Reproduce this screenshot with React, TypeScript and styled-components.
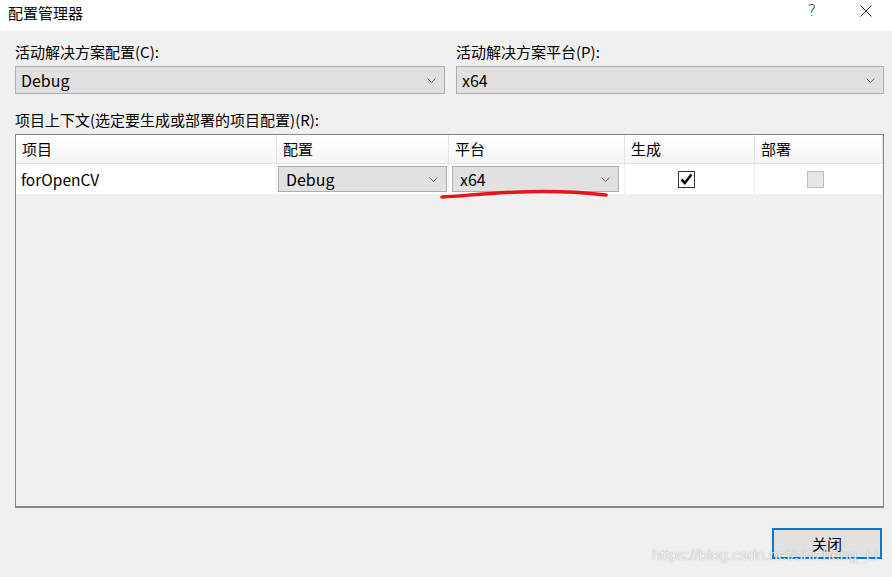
import React from 'react';
import styled, { createGlobalStyle } from 'styled-components';

const GlobalStyle = createGlobalStyle`
  html, body {
    margin: 0;
    padding: 0;
    background: #f0f0f0;
  }
  * {
    box-sizing: border-box;
  }
`;

const FONT = `"Noto Sans CJK SC", "Noto Sans", sans-serif`;

const Window = styled.div`
  position: relative;
  width: 892px;
  height: 577px;
  display: flex;
  flex-direction: column;
  background: #f0f0f0;
  font-family: ${FONT};
  font-size: 15px;
  color: #000;
  overflow: hidden;
`;

const TitleBar = styled.div`
  height: 31px;
  flex-shrink: 0;
  display: flex;
  align-items: center;
  background: #fff;
  padding-left: 8px;
`;

const Title = styled.div`
  flex-grow: 1;
  line-height: 20px;
  margin-top: -6px;
`;

const TitleButton = styled.div<{ $gap?: number }>`
  width: 46px;
  height: 31px;
  display: flex;
  align-items: center;
  justify-content: center;
  margin-top: -10px;
  margin-right: ${(p) => p.$gap ?? 0}px;
  font-size: 16px;
  font-family: "DejaVu Sans", sans-serif;
  font-weight: 300;
  color: #222;
`;

const Content = styled.div`
  flex-grow: 1;
  display: flex;
  flex-direction: column;
  padding: 11px 8px 18px 15px;
`;

const TopRow = styled.div`
  display: grid;
  grid-template-columns: 430px 1fr;
  column-gap: 11px;
`;

const Field = styled.div`
  display: flex;
  flex-direction: column;
  gap: 4px;
`;

const Label = styled.div`
  line-height: 20px;
  height: 20px;
  white-space: nowrap;
`;

const ComboBox = styled.div<{ $h?: number }>`
  height: ${(p) => p.$h ?? 28}px;
  display: flex;
  align-items: center;
  justify-content: space-between;
  padding: 0 8px 0 5px;
  background: #e1e1e1;
  border: 1px solid #adadad;
  line-height: 20px;
  font-size: 16px;
`;

const Chevron: React.FC = () => (
  <svg width="9" height="5" viewBox="0 0 9 5">
    <path d="M0.5 0.5 L4.5 4.5 L8.5 0.5" fill="none" stroke="#606060" strokeWidth="1" />
  </svg>
);

const GridLabel = styled(Label)`
  margin-top: 16px;
  margin-bottom: 4px;
`;

const Grid = styled.div`
  height: 374px;
  border: 1px solid #828790;
  border-bottom-width: 2px;
  background: #f0f0f0;
  display: grid;
  grid-template-columns: 261px 172px 176px 130px 1fr;
  grid-template-rows: 29px 30px;
  align-content: start;
`;

const HeaderCell = styled.div`
  display: flex;
  align-items: center;
  padding-left: 6px;
  background: linear-gradient(#ffffff, #f6f6f6);
  border-right: 1px solid #e5e5e5;
  border-bottom: 1px solid #e2e2e2;
  line-height: 20px;
  &:last-of-type {
    border-right: none;
  }
`;

const Cell = styled.div<{ $center?: boolean; $pad?: string }>`
  display: flex;
  align-items: center;
  justify-content: ${(p) => (p.$center ? 'center' : 'flex-start')};
  padding: ${(p) => p.$pad ?? '0 0 0 5px'};
  background: #fff;
  border-right: 1px solid #f0f0f0;
  font-size: 15.5px;
  line-height: 20px;
`;

const CellCombo = styled(ComboBox)`
  flex-grow: 1;
  padding: 0 8px 0 7px;
`;

const CheckBox = styled.div<{ $disabled?: boolean }>`
  width: 17px;
  height: 17px;
  border: 1px solid ${(p) => (p.$disabled ? '#bcbcbc' : '#333')};
  background: ${(p) => (p.$disabled ? '#e6e6e6' : '#fff')};
  display: flex;
  align-items: center;
  justify-content: center;
`;

const ButtonRow = styled.div`
  margin-top: 20px;
  display: flex;
  justify-content: flex-end;
  padding-right: 2px;
`;

const Button = styled.button`
  width: 110px;
  height: 31px;
  border: 2px solid #0078d7;
  background: #e1e1e1;
  font-family: ${FONT};
  font-size: 15px;
  line-height: 20px;
  color: #000;
  padding: 0;
`;

const Watermark = styled.div`
  position: absolute;
  left: 652px;
  top: 545px;
  font-family: "Liberation Sans", Arial, sans-serif;
  font-size: 15.5px;
  line-height: 20px;
  color: rgba(255, 255, 255, 0.85);
  text-shadow: 0 0 1px rgba(110, 110, 110, 0.75);
  white-space: nowrap;
  pointer-events: none;
`;

const Scribble = styled.svg`
  position: absolute;
  left: 0;
  top: 0;
  pointer-events: none;
`;

const columns = ['项目', '配置', '平台', '生成', '部署'];

export default function App() {
  return (
    <Window>
      <GlobalStyle />
      <TitleBar>
        <Title>配置管理器</Title>
        <TitleButton $gap={8}>?</TitleButton>
        <TitleButton $gap={3}>
          <svg width="12" height="12" viewBox="0 0 12 12">
            <path d="M0.5 0.5 L11.5 11.5 M11.5 0.5 L0.5 11.5" stroke="#333" strokeWidth="1" />
          </svg>
        </TitleButton>
      </TitleBar>
      <Content>
        <TopRow>
          <Field>
            <Label>活动解决方案配置(C):</Label>
            <ComboBox>
              <span>Debug</span>
              <Chevron />
            </ComboBox>
          </Field>
          <Field>
            <Label>活动解决方案平台(P):</Label>
            <ComboBox>
              <span>x64</span>
              <Chevron />
            </ComboBox>
          </Field>
        </TopRow>
        <GridLabel>项目上下文(选定要生成或部署的项目配置)(R):</GridLabel>
        <Grid>
          {columns.map((c) => (
            <HeaderCell key={c}>{c}</HeaderCell>
          ))}
          <Cell>forOpenCV</Cell>
          <Cell $pad="2px 1px 2px 1px">
            <CellCombo $h={26}>
              <span>Debug</span>
              <Chevron />
            </CellCombo>
          </Cell>
          <Cell $pad="2px 5px 2px 3px">
            <CellCombo $h={26}>
              <span>x64</span>
              <Chevron />
            </CellCombo>
          </Cell>
          <Cell $center $pad="0 6px 0 0">
            <CheckBox>
              <svg width="13" height="12" viewBox="0 0 13 12">
                <path d="M1.5 6.5 L4.8 10 L11.5 1.5" fill="none" stroke="#111" strokeWidth="2.6" />
              </svg>
            </CheckBox>
          </Cell>
          <Cell $center $pad="0 6px 0 0">
            <CheckBox $disabled />
          </Cell>
        </Grid>
        <ButtonRow>
          <Button>关闭</Button>
        </ButtonRow>
      </Content>
      <Scribble width="892" height="577">
        <path
          d="M442 197 C 480 195, 535 187, 606 195"
          fill="none"
          stroke="#e8141b"
          strokeWidth="3.5"
          strokeLinecap="round"
        />
      </Scribble>
      <Watermark>https://blog.csdn.net/shizheng_Li</Watermark>
    </Window>
  );
}
